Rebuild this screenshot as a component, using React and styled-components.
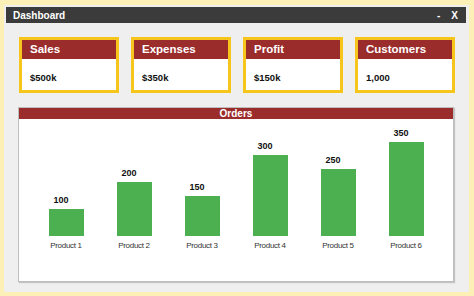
import styled, { createGlobalStyle } from "styled-components";

const GlobalStyle = createGlobalStyle`
  html, body {
    margin: 0;
    padding: 0;
    background: #fcf0b6;
  }
  body {
    font-family: "Liberation Sans", Arial, sans-serif;
  }
`;

const cards = [
  { title: "Sales", value: "$500k" },
  { title: "Expenses", value: "$350k" },
  { title: "Profit", value: "$150k" },
  { title: "Customers", value: "1,000" },
];

const orders = [
  { name: "Product 1", value: 100 },
  { name: "Product 2", value: 200 },
  { name: "Product 3", value: 150 },
  { name: "Product 4", value: 300 },
  { name: "Product 5", value: 250 },
  { name: "Product 6", value: 350 },
];

export default function App() {
  return (
    <>
      <GlobalStyle />
      <Window>
        <TitleBar>
          <Title>Dashboard</Title>
          <Controls>
            <span>-</span>
            <span>X</span>
          </Controls>
        </TitleBar>
        <CardRow>
          {cards.map((c) => (
            <Card key={c.title}>
              <CardHeader>{c.title}</CardHeader>
              <CardValue>{c.value}</CardValue>
            </Card>
          ))}
        </CardRow>
        <Panel>
          <PanelHeader>Orders</PanelHeader>
          <Chart>
            {orders.map((o) => (
              <Column key={o.name}>
                <BarValue>{o.value}</BarValue>
                <Bar style={{ height: `${o.value * 0.27}px` }} />
                <BarLabel>{o.name}</BarLabel>
              </Column>
            ))}
          </Chart>
        </Panel>
      </Window>
    </>
  );
}

const Window = styled.div`
  margin: 5px 5px 4px 4px;
  height: 287px;
  background: #efefef;
  box-sizing: border-box;
  padding: 2px 3px 0 2px;
  display: flex;
  flex-direction: column;
`;

const TitleBar = styled.div`
  height: 16px;
  background: #3b3b3b;
  color: #ffffff;
  display: flex;
  align-items: center;
  justify-content: space-between;
  padding: 0 8px 0 7px;
`;

const Title = styled.div`
  font-size: 10px;
  font-weight: 700;
`;

const Controls = styled.div`
  display: flex;
  gap: 11px;
  font-size: 10px;
  font-weight: 700;
`;

const CardRow = styled.div`
  display: flex;
  gap: 12px;
  margin: 14px 0 0 13px;
`;

const Card = styled.div`
  width: 100px;
  height: 56px;
  box-sizing: border-box;
  border: 3px solid #f8c51c;
  background: #ffffff;
  display: flex;
  flex-direction: column;
`;

const CardHeader = styled.div`
  height: 19px;
  background: #9b2c2c;
  color: #ffffff;
  font-size: 11.5px;
  font-weight: 700;
  line-height: 19px;
  padding-left: 8px;
`;

const CardValue = styled.div`
  flex: 1;
  display: flex;
  align-items: center;
  padding-left: 8px;
  padding-top: 6px;
  font-size: 9.5px;
  font-weight: 700;
  color: #111111;
`;

const Panel = styled.div`
  margin: 14px 12px 0 12px;
  height: 175px;
  box-sizing: border-box;
  background: #ffffff;
  border: 1px solid #bdbdbd;
  box-shadow: 1px 1px 1px rgba(0, 0, 0, 0.18);
  display: flex;
  flex-direction: column;
`;

const PanelHeader = styled.div`
  height: 11px;
  background: #9b2c2c;
  color: #ffffff;
  font-size: 10px;
  font-weight: 700;
  line-height: 11px;
  text-align: center;
`;

const Chart = styled.div`
  display: grid;
  grid-template-columns: repeat(6, 68px);
  justify-content: center;
  align-items: end;
  height: 131px;
`;

const Column = styled.div`
  display: flex;
  flex-direction: column;
  align-items: center;
`;

const BarValue = styled.div`
  font-size: 9px;
  font-weight: 700;
  color: #111111;
  margin-right: 10px;
  margin-bottom: 4px;
  line-height: 10px;
`;

const Bar = styled.div`
  width: 35px;
  background: #4caf50;
`;

const BarLabel = styled.div`
  margin-top: 5px;
  font-size: 8px;
  letter-spacing: -0.3px;
  color: #333333;
  line-height: 9px;
`;
